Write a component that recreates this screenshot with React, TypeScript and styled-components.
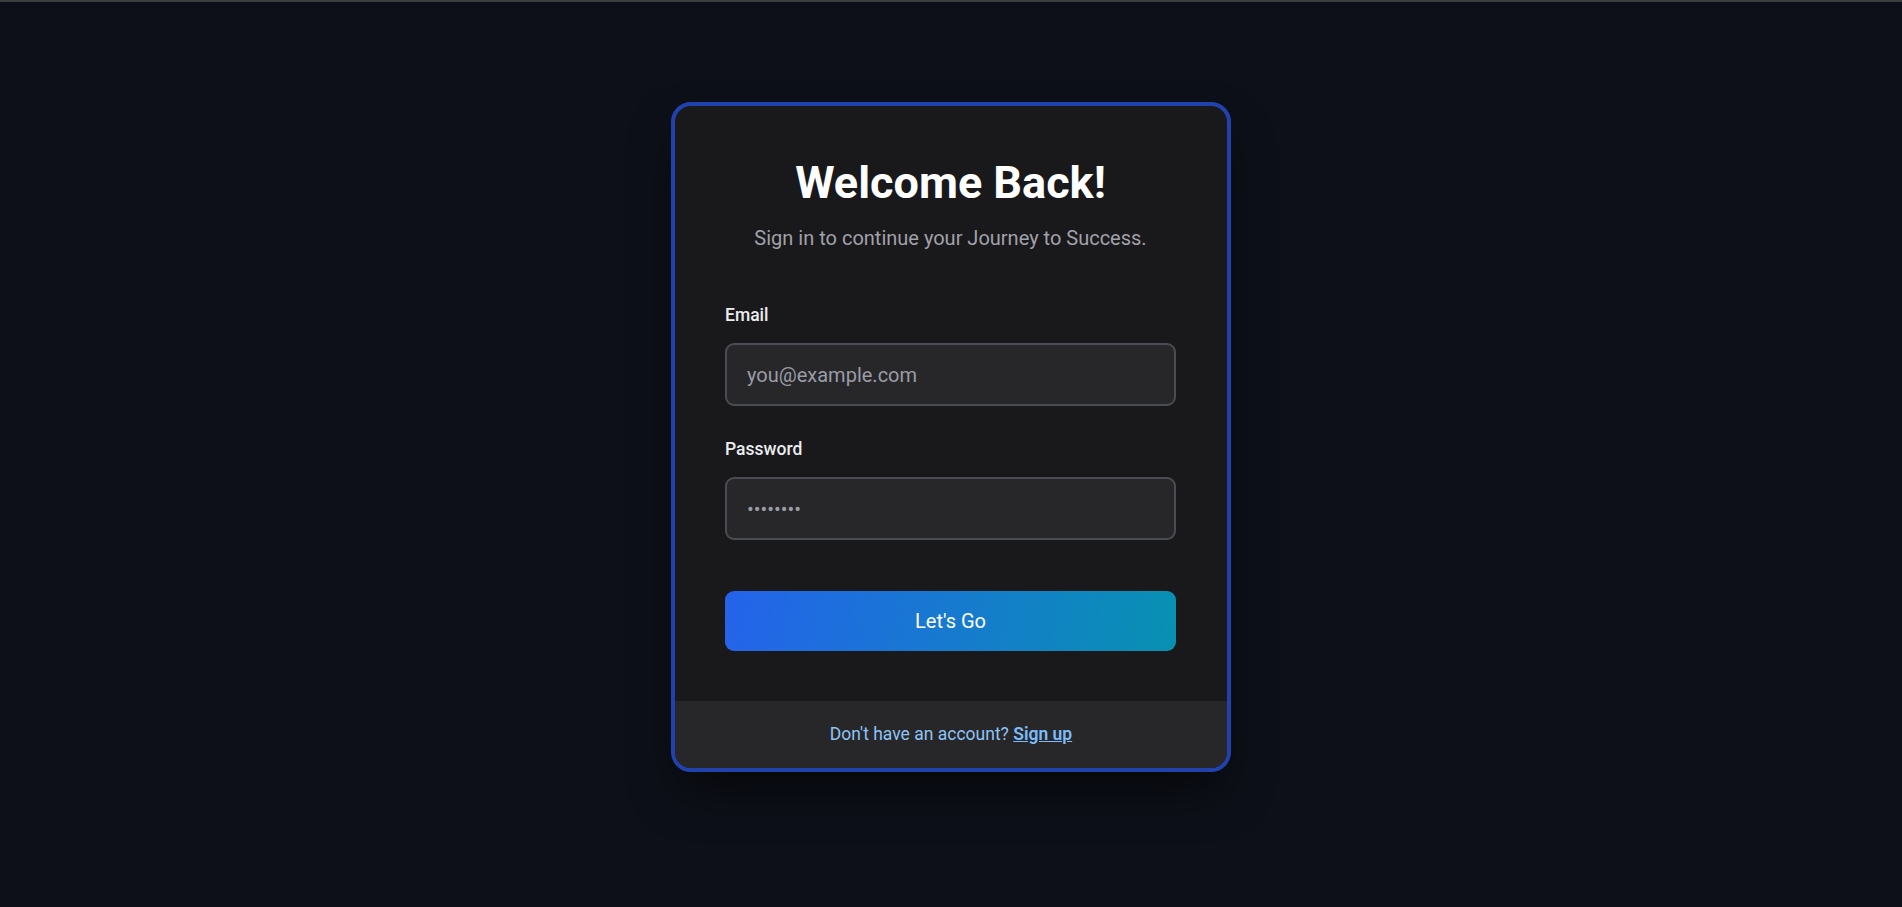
import React from "react";
import styled, { createGlobalStyle } from "styled-components";

const GlobalStyle = createGlobalStyle`
  html, body {
    margin: 0;
    padding: 0;
    background: #0d1018;
    font-family: Roboto, "Noto Sans", "Liberation Sans", sans-serif;
  }
  * { box-sizing: border-box; }
`;

const Page = styled.div`
  min-height: 907px;
  background: #0d1018;
  border-top: 2px solid #3d3e40;
  display: flex;
  justify-content: center;
  align-items: flex-start;
  padding-top: 100px;
`;

const Card = styled.div`
  width: 560px;
  background: #19191b;
  border: 4px solid #2141ad;
  border-radius: 20px;
  overflow: hidden;
  box-shadow: 0 25px 50px -12px rgba(0, 0, 0, 0.6);
  display: flex;
  flex-direction: column;
`;

const Body = styled.div`
  padding: 52px 51px 50px 50px;
  display: flex;
  flex-direction: column;
`;

const Header = styled.div`
  text-align: center;
  margin-bottom: 50px;
`;

const Title = styled.h1`
  margin: 0;
  font-size: 45px;
  line-height: 50px;
  font-weight: 700;
  color: #ffffff;
`;

const Subtitle = styled.p`
  margin: 15px 0 0;
  font-size: 20px;
  line-height: 30px;
  color: #a1a1aa;
`;

const Field = styled.div<{ $gap?: number }>`
  display: flex;
  flex-direction: column;
  margin-bottom: ${(p) => p.$gap ?? 0}px;
`;

const Label = styled.label`
  font-size: 17.5px;
  line-height: 25px;
  font-weight: 500;
  color: #ececef;
  margin-bottom: 15px;
`;

const Input = styled.input`
  width: 100%;
  height: 63px;
  padding: 0 20px;
  background: #27272a;
  border: 2px solid #4b4b53;
  border-radius: 9px;
  color: #f4f4f5;
  font-family: inherit;
  font-size: 20px;
  outline: none;
  &::placeholder {
    color: #9a9ca6;
  }
`;

const Button = styled.button`
  margin-top: 51px;
  height: 60px;
  width: 100%;
  border: none;
  border-radius: 9px;
  background: linear-gradient(100deg, #2563eb 0%, #0891b2 100%);
  color: #ffffff;
  font-family: inherit;
  font-size: 20px;
  font-weight: 400;
  cursor: pointer;
`;

const Footer = styled.div`
  background: #27272a;
  padding: 21px 0;
  text-align: center;
  font-size: 17.5px;
  line-height: 25px;
  color: #8ec4f6;
`;

const Link = styled.a`
  color: #7cbcf6;
  font-weight: 600;
  text-decoration: underline;
  cursor: pointer;
`;

export default function App() {
  return (
    <>
      <GlobalStyle />
      <Page>
        <Card>
          <Body>
            <Header>
              <Title>Welcome Back!</Title>
              <Subtitle>Sign in to continue your Journey to Success.</Subtitle>
            </Header>
            <Field $gap={31}>
              <Label htmlFor="email">Email</Label>
              <Input id="email" type="email" placeholder="you@example.com" />
            </Field>
            <Field>
              <Label htmlFor="password">Password</Label>
              <Input id="password" type="password" placeholder="••••••••" />
            </Field>
            <Button type="button">Let's Go</Button>
          </Body>
          <Footer>
            Don't have an account? <Link>Sign up</Link>
          </Footer>
        </Card>
      </Page>
    </>
  );
}
